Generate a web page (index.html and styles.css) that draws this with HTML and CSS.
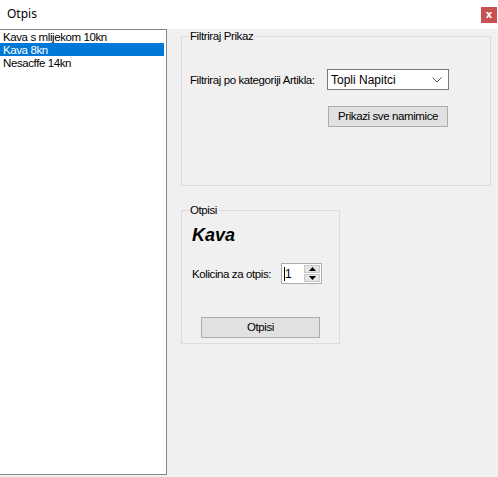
FILE: index.html
```html
<!DOCTYPE html>
<html>
<head>
<meta charset="utf-8">
<link rel="stylesheet" href="styles.css">
</head>
<body>
<div class="window">
  <div class="titlebar">
    <span class="title">Otpis</span>
    <span class="close">x</span>
  </div>
  <div class="main">
    <div class="listbox">
      <div class="item">Kava s mlijekom 10kn</div>
      <div class="item selected">Kava 8kn</div>
      <div class="item">Nesacffe 14kn</div>
    </div>
    <div class="panel">
      <div class="group group-filter">
        <span class="legend">Filtriraj Prikaz</span>
        <div class="row filter-row">
          <span class="label">Filtriraj po kategoriji Artikla:</span>
          <div class="combo">
            <span>Topli Napitci</span>
            <svg class="chev" width="10" height="6" viewBox="0 0 10 6"><path d="M0.5 0.5 L5 5 L9.5 0.5" fill="none" stroke="#555" stroke-width="1"/></svg>
          </div>
        </div>
        <div class="btn btn-show">Prikazi sve namimice</div>
      </div>
      <div class="group group-otpis">
        <span class="legend">Otpisi</span>
        <div class="product">Kava</div>
        <div class="row qty-row">
          <span class="label">Kolicina za otpis:</span>
          <div class="numeric">
            <div class="num-value"><span class="caret"></span>1</div>
            <div class="spin">
              <div class="spin-btn"><svg width="7" height="4" viewBox="0 0 7 4"><path d="M3.5 0 L7 4 L0 4 Z" fill="#000"/></svg></div>
              <div class="spin-btn"><svg width="7" height="4" viewBox="0 0 7 4"><path d="M0 0 L7 0 L3.5 4 Z" fill="#000"/></svg></div>
            </div>
          </div>
        </div>
        <div class="btn btn-otpisi">Otpisi</div>
      </div>
    </div>
  </div>
</div>
</body>
</html>
```
FILE: styles.css
```css
* { box-sizing: border-box; }
html, body { margin: 0; padding: 0; }
body {
  width: 498px;
  height: 477px;
  overflow: hidden;
  background: #f0f0f0;
  font-family: "Liberation Sans", Arial, sans-serif;
  font-size: 11.5px;
  letter-spacing: -0.4px;
  color: #000;
}
.window { width: 498px; height: 477px; display: flex; flex-direction: column; }
.titlebar {
  height: 29px;
  background: #fff;
  display: flex;
  align-items: flex-start;
  justify-content: space-between;
  flex: none;
  letter-spacing: 0;
}
.title {
  font-family: "Noto Sans", "Liberation Sans", sans-serif;
  font-size: 12px;
  margin-left: 7px;
  margin-top: 5px;
  line-height: 17px;
}
.close {
  width: 16px;
  height: 16px;
  margin-top: 7px;
  margin-right: 1px;
  background: #c75050;
  color: #fff;
  font-weight: bold;
  font-size: 10px;
  line-height: 15px;
  text-align: center;
  font-family: "DejaVu Sans", sans-serif;
}
.main { flex: 1; display: flex; align-items: flex-start; }
.listbox {
  width: 167px;
  height: 446px;
  background: #fff;
  border: 1px solid #828790;
  border-left: none;
  padding: 0 2px 0 0;
  flex: none;
}
.item {
  height: 13px;
  line-height: 14px;
  padding-left: 3px;
  white-space: nowrap;
}
.item.selected { background: #0078d7; color: #fff; }
.panel {
  display: flex;
  flex-direction: column;
  align-items: flex-start;
  padding-left: 14px;
  padding-top: 7px;
}
.group {
  position: relative;
  border: 1px solid #dcdcdc;
}
.legend {
  position: absolute;
  top: -7px;
  left: 7px;
  padding: 0 1px;
  background: #f0f0f0;
  line-height: 13px;
}
.group-filter {
  width: 310px;
  height: 150px;
  padding: 32px 0 0 8px;
}
.row { display: flex; align-items: center; }
.filter-row .label { width: 137px; }
.combo {
  width: 122px;
  height: 21px;
  border: 1px solid #7a7a7a;
  background: #fff;
  display: flex;
  align-items: center;
  justify-content: space-between;
  padding: 0 6px 0 3px;
  letter-spacing: 0;
}
.combo span { font-size: 12px; }
.chev { margin-top: 1px; }
.btn {
  background: #e1e1e1;
  border: 1px solid #adadad;
  text-align: center;
  height: 21px;
  line-height: 19px;
  font-size: 11.5px;
}
.btn-show { width: 120px; margin: 16px 0 0 138px; }
.group-otpis {
  width: 159px;
  height: 134px;
  margin-top: 24px;
  padding: 14px 0 0 10px;
}
.product {
  font-weight: bold;
  font-style: italic;
  font-size: 18px;
  line-height: 20px;
  letter-spacing: 0;
  font-family: "Liberation Sans", Arial, sans-serif;
}
.qty-row { margin-top: 18px; }
.qty-row .label { width: 89px; }
.numeric {
  width: 41px;
  height: 21px;
  border: 1px solid #abadb3;
  background: #fff;
  display: flex;
}
.num-value {
  flex: 1;
  display: flex;
  align-items: center;
  padding-left: 2px;
  font-size: 12px;
}
.caret { width: 1px; height: 14px; background: #000; margin-right: 0px; }
.spin { width: 17px; display: flex; flex-direction: column; padding: 1px 1px 1px 0; gap: 1px; }
.spin-btn {
  flex: 1;
  background: #e5e5e5;
  border: 1px solid #c8c8c8;
  display: flex;
  align-items: center;
  justify-content: center;
}
.btn-otpisi { width: 119px; margin: 33px 0 0 9px; }
```
